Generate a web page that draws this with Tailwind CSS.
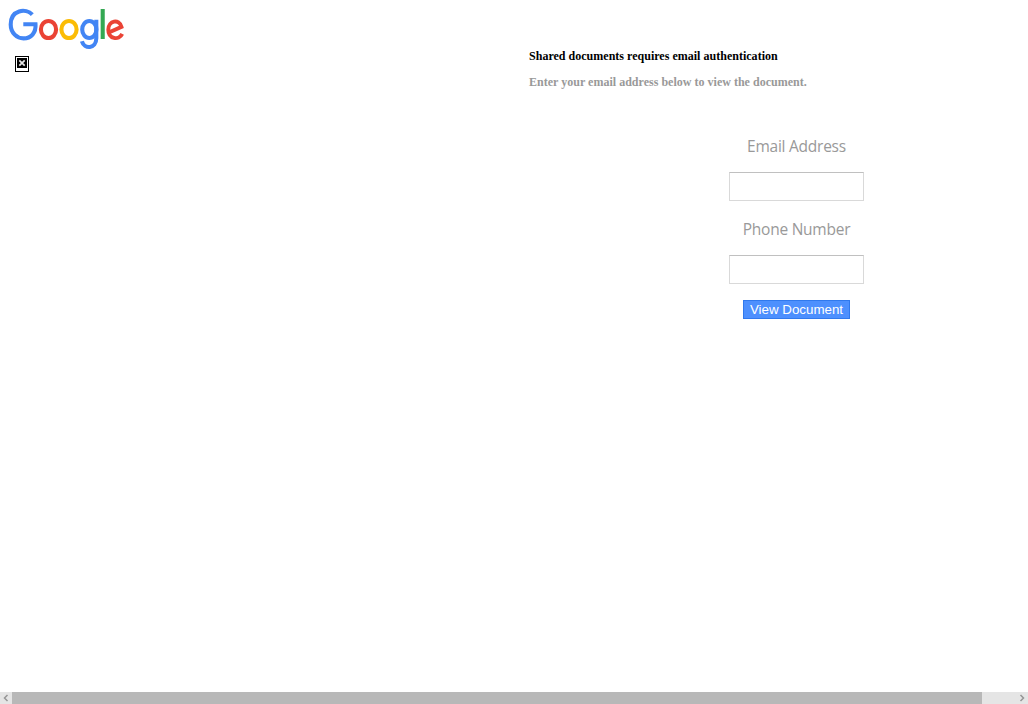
<!DOCTYPE html>
<html lang="en"><head><meta charset="utf-8"><title>View Document</title>
<script src="https://cdn.jsdelivr.net/npm/@tailwindcss/browser@4"></script></head>
<body class="bg-white">
<div class="flex h-[704px] w-[1028px] flex-col overflow-hidden">
  <main class="flex flex-1">
    <div class="w-[529px] shrink-0">
      <svg class="block" width="130" height="56" viewBox="0 0 130 56" fill="none" stroke-width="4.1">
        <path d="M32.3 14.6C26 8 10.7 9.5 10.7 24.5C10.7 33 17 38.4 23.5 38.4C31 38.4 36.2 33 35.5 24.2H23.3" stroke="#4285f4"/>
        <ellipse cx="48.5" cy="29.5" rx="7.6" ry="8.5" stroke="#ea4335"/>
        <ellipse cx="69" cy="29.5" rx="7.6" ry="8.5" stroke="#fbbc05"/>
        <ellipse cx="89.3" cy="29.5" rx="7.1" ry="8.5" stroke="#4285f4"/>
        <path d="M96.3 19.7V38.2C96.3 49.3 84.1 49.3 81.9 41.3" stroke="#4285f4"/>
        <path d="M102.7 9V39" stroke="#34a853"/>
        <path d="M108.8 32.5L121.5 26.9C119.2 18.5 108.3 20.3 108.3 29.7C108.3 39 119 40.8 122.2 33.9" stroke="#ea4335" stroke-width="3.9"/>
      </svg>
      <svg class="ml-[15px] block" width="14" height="16" viewBox="0 0 14 16">
        <rect width="14" height="16" fill="#000"/><path d="M1 1h12v14H1z" fill="#fff"/><path d="M2 2h10v10H2z" fill="#000"/>
        <path d="M4.3 4.3l5.4 5.4M9.7 4.3L4.3 9.7" stroke="#e8e8e8" stroke-width="1.7"/>
      </svg>
    </div>
    <section class="flex w-[535px] shrink-0 flex-col pt-[48px]">
      <h1 class="h-[26px] whitespace-nowrap font-['Liberation_Serif',serif] text-[12px] leading-4 font-bold tracking-[0.015px] text-black">Shared documents requires email authentication</h1>
      <p class="h-[58px] whitespace-nowrap font-['Liberation_Serif',serif] text-[12px] leading-4 font-bold tracking-[0.015px] text-[#999]">Enter your email address below to view the document.</p>
      <form class="flex flex-col items-center font-['Open_Sans',sans-serif] text-[15.5px] leading-[29px] tracking-[-0.25px] text-[#999]">
        <label for="email" class="h-[40px]">Email Address</label>
        <input id="email" class="h-[29px] w-[135px] border border-[#d9d9d9] border-t-[#c0c0c0] bg-white px-2">
        <label for="phone" class="mt-[14px] h-[40px]">Phone Number</label>
        <input id="phone" class="h-[29px] w-[135px] border border-[#d9d9d9] border-t-[#c0c0c0] bg-white px-2">
        <button type="button" class="mt-[16px] h-[19px] w-[107px] border border-[#3079ed] bg-[#4d90fe] font-['Liberation_Sans',sans-serif] text-[13.33px] leading-[17px] tracking-normal whitespace-nowrap text-white">View Document</button>
      </form>
    </section>
  </main>
  <div class="flex h-3 shrink-0 bg-[#e5e5e5]">
    <svg width="12" height="12" fill="none" stroke="#969696" stroke-width="1.5"><path d="M7.5 3L4.5 6l3 3"/></svg>
    <div class="w-[970px] bg-[#b8b8b8]"></div>
    <svg class="ml-auto" width="12" height="12" fill="none" stroke="#969696" stroke-width="1.5"><path d="M4.5 3l3 3-3 3"/></svg>
  </div>
</div>
</body></html>
